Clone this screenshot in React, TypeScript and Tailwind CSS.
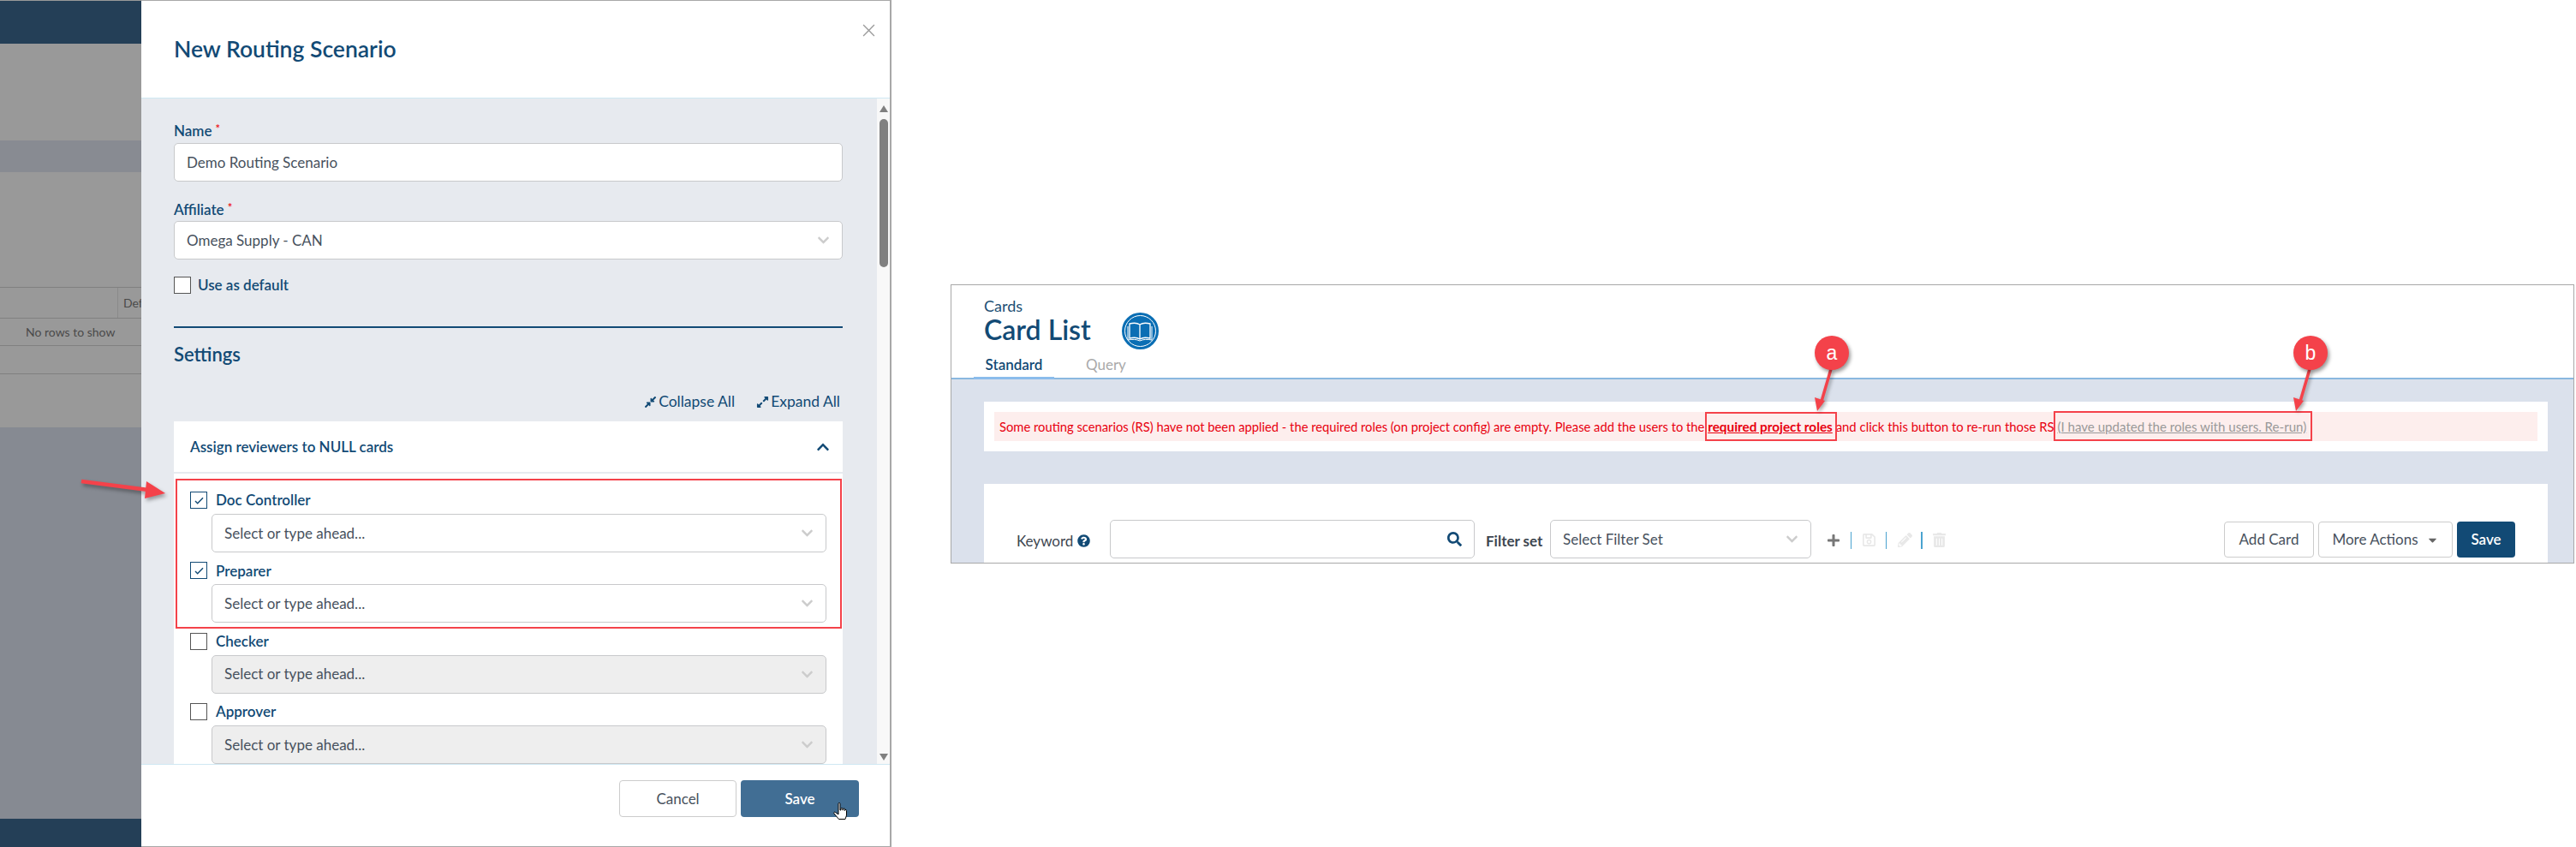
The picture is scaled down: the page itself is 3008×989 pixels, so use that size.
import {
  FaCaretDown,
  FaChevronDown,
  FaChevronUp,
  FaCompressAlt,
  FaExpandAlt,
  FaPencilAlt,
  FaPlus,
  FaQuestionCircle,
  FaRegSave,
  FaSearch,
  FaTrashAlt,
} from "react-icons/fa";

const font = "font-['Lato','Open_Sans',sans-serif]";

function Select({
  text,
  disabled = false,
  className = "",
}: {
  text: string;
  disabled?: boolean;
  className?: string;
}) {
  return (
    <div
      className={`flex h-[45px] items-center justify-between rounded-[5px] border-[1.5px] border-[#c8c9cb] pl-[14px] pr-[14px] text-[17px] text-[#47515d] ${
        disabled ? "bg-[#eeeeee]" : "bg-white"
      } ${className}`}
    >
      <span>{text}</span>
      <FaChevronDown className="h-[15px] w-[15px] text-[#cccccc]" />
    </div>
  );
}

function Reviewer({ label, checked }: { label: string; checked: boolean }) {
  return (
    <div className="mb-[11.3px]">
      <div className="flex h-5 items-center">
        <Checkbox checked={checked} />
        <span className="ml-[10px] text-[17px] font-semibold text-[#124a75]">{label}</span>
      </div>
      <Select text="Select or type ahead..." disabled={!checked} className="ml-[25px] mr-[19px] mt-[6px]" />
    </div>
  );
}

function Checkbox({ checked }: { checked: boolean }) {
  return (
    <div
      className={`flex h-5 w-5 items-center justify-center border-[1.5px] bg-white ${
        checked ? "border-[#124a75]" : "border-[#555555]"
      }`}
    >
      {checked && (
        <svg viewBox="0 0 12 10" className="h-[9px] w-[11px]">
          <path d="M1 5.5 L4 8.5 L11 1.5" fill="none" stroke="#124a75" strokeWidth="1.6" />
        </svg>
      )}
    </div>
  );
}

function Required({ label }: { label: string }) {
  return (
    <div className="flex h-5 items-start text-[17px] font-semibold leading-5 text-[#124a75]">
      {label}
      <span className="ml-[4px] text-[13px] leading-[14px] text-[#ee1111]">*</span>
    </div>
  );
}

function Backdrop() {
  return (
    <div className="relative h-[989px] w-[165px] shrink-0 overflow-hidden bg-[#999999] text-[14px] text-[#4a4a4a]">
      <div className="mt-px h-[50px] bg-[#243f57]" />
      <div className="mt-[113px] h-[37px] bg-[#888b92]" />
      <div className="mt-[134px] flex h-[37px] justify-end border-y border-[#808080]">
        <div className="flex w-[28px] items-center border-l border-[#8a8a8a] pl-[6px]">
          <span className="overflow-hidden">Def</span>
        </div>
      </div>
      <div className="flex h-[32px] items-center border-b border-[#808080] pl-[30px]">No rows to show</div>
      <div className="h-[33px] border-b border-[#808080]" />
      <div className="mt-[62px] h-[457px] bg-[#868a92]" />
      <div className="h-[33px] bg-[#243f57]" />
    </div>
  );
}

function RoutingModal() {
  return (
    <div className="flex h-[989px] w-[876px] shrink-0 flex-col border-x-0 border-y border-r-2 border-[#a8a8a8] bg-white">
      <div className="relative h-[113px] shrink-0 pl-[38px] pt-[40px]">
        <h1 className="text-[26.5px] font-semibold leading-[32px] text-[#124a75]">New Routing Scenario</h1>
        <svg viewBox="0 0 14 14" className="absolute right-[17px] top-[27px] h-[15px] w-[15px]">
          <path d="M1 1 L13 13 M13 1 L1 13" stroke="#9a9a9a" strokeWidth="1.2" />
        </svg>
      </div>
      <div className="flex min-h-0 flex-1 border-y border-[#cfe8f3]">
        <div className="min-w-0 flex-1 overflow-hidden bg-[#e7eaef] pl-[38px] pr-[40px] pt-[28px]">
          <Required label="Name" />
          <div className="mt-1 flex h-[45px] items-center rounded-[5px] border-[1.5px] border-[#c8c9cb] bg-white pl-[14px] text-[17px] text-[#47515d]">
            Demo Routing Scenario
          </div>
          <div className="mt-[23px]">
            <Required label="Affiliate" />
          </div>
          <Select text="Omega Supply - CAN" className="mt-[3px]" />
          <div className="mt-5 flex h-5 items-center">
            <Checkbox checked={false} />
            <span className="ml-2 text-[17px] font-semibold text-[#124a75]">Use as default</span>
          </div>
          <div className="mt-[38px] h-[2px] bg-[#124a75]" />
          <h2 className="mt-[16px] h-[30px] text-[22px] font-semibold leading-[30px] text-[#124a75]">Settings</h2>
          <div className="mt-[30px] flex h-5 items-center justify-end gap-[25px] pr-[3px] text-[17.5px] text-[#124a75]">
            <span className="flex items-center gap-[2px]">
              <FaCompressAlt className="h-[15px] w-[15px]" /> Collapse All
            </span>
            <span className="flex items-center gap-[2px]">
              <FaExpandAlt className="h-[15px] w-[15px]" /> Expand All
            </span>
          </div>
          <div className="relative mt-[13px] bg-white">
            <div className="flex h-[61px] items-center justify-between border-b-2 border-[#e7eaef] pl-[19px] pr-[15px]">
              <span className="text-[17px] font-semibold text-[#124a75]">Assign reviewers to NULL cards</span>
              <FaChevronUp className="h-[16px] w-[16px] text-[#124a75]" />
            </div>
            <div className="pl-[19px] pt-[21px]">
              <Reviewer label="Doc Controller" checked />
              <Reviewer label="Preparer" checked />
              <Reviewer label="Checker" checked={false} />
              <Reviewer label="Approver" checked={false} />
            </div>
            <div className="absolute left-[2px] top-[67px] h-[175px] w-[778px] border-2 border-[#f4424a]" />
          </div>
        </div>
        <div className="relative w-[15px] shrink-0 bg-[#f8f8f8]">
          <div className="absolute left-[3px] top-[8px] h-0 w-0 border-x-[5px] border-b-[8px] border-x-transparent border-b-[#808080]" />
          <div className="absolute left-[3px] top-[24px] h-[173px] w-[10px] rounded-[5px] bg-[#808080]" />
          <div className="absolute bottom-[4px] left-[3px] h-0 w-0 border-x-[5px] border-t-[8px] border-x-transparent border-t-[#808080]" />
        </div>
      </div>
      <div className="relative flex h-[95px] shrink-0 justify-end gap-[5px] pr-[36px] pt-[18px]">
        <button className="h-[43px] w-[137px] rounded-[4px] border-[1.5px] border-[#cccccc] bg-white text-[17px] text-[#47515d]">
          Cancel
        </button>
        <button className="h-[43px] w-[138px] rounded-[4px] bg-[#416e94] text-[17px] font-semibold text-white">
          Save
        </button>
        <svg viewBox="0 0 17 21" className="absolute left-[808px] top-[44px] h-[21px] w-[17px]">
          <path
            d="M6 1.5 a1 1 0 0 1 2 0 V9 h1 V7.5 a1 1 0 0 1 2 0 V9 h.5 V8 a1 1 0 0 1 2 0 V9.5 a1 1 0 0 1 2 0 V15 l-1.5 4.5 H6.5 L1 13 a1 1 0 0 1 1.5 -1.5 L6 14 Z"
            fill="#ffffff"
            stroke="#000000"
            strokeWidth="1"
          />
        </svg>
      </div>
    </div>
  );
}

function CardListPanel() {
  return (
    <div className="relative ml-[69px] mt-[332px] h-[326px] w-[1896px] shrink-0 overflow-hidden border-[1.5px] border-[#a8a8a8] bg-white">
      <div className="h-[110px] border-b-2 border-[#8ab8e0] pl-[26px] pr-0">
        <div className="ml-[12px] pt-[12px] text-[18px] leading-[24px] text-[#1d5074]">Cards</div>
        <div className="ml-[12px] flex h-[32px] items-center">
          <span className="text-[32px] font-semibold leading-[32px] text-[#124a75]">Card List</span>
          <div className="ml-[36px] mt-[3px] flex h-[43px] w-[43px] items-center justify-center rounded-full border-2 border-[#0a6eb4] bg-[#0a6eb4] outline outline-1 -outline-offset-4 outline-white">
            <svg viewBox="0 0 30 24" className="h-[24px] w-[30px]">
              <path d="M15 4 C12 2 7 2 3 3 L3 20 C7 19 12 19 15 21 C18 19 23 19 27 20 L27 3 C23 2 18 2 15 4 Z M15 4 L15 21" fill="none" stroke="#ffffff" strokeWidth="1.3" />
              <path d="M1 6 L1 22 C6 21 11 21 15 23 C19 21 24 21 29 22 L29 6" fill="none" stroke="#ffffff" strokeWidth="1" />
            </svg>
          </div>
        </div>
        <div className="flex h-[42px] items-end text-[17px]">
          <div className="flex h-[30px] w-[94px] items-start justify-center border-b-[3px] border-[#8bbcec] font-semibold text-[#124a75]">
            Standard
          </div>
          <div className="ml-[37px] h-[30px] text-[#aaaaaa]">Query</div>
        </div>
      </div>
      <div className="h-[214px] bg-[#dbe1ec] pl-[38px] pr-[30px] pt-[26px]">
        <div className="h-[58px] bg-white p-[12px]">
          <div className="flex h-[34px] items-center whitespace-pre bg-[#fdeeed] pl-[6px] text-[14.75px] text-[#e8000f]">
            Some routing scenarios (RS) have not been applied - the required roles (on project config) are empty. Please add the users to the{" "}
            <span className="text-[15.3px] font-bold underline">required project roles</span>
            <span className="text-[14.9px]">{" "}and click this button to re-run those RS{" "}</span>
            <span className="text-[15.1px] text-[#999999] underline">(I have updated the roles with users. Re-run)</span>
          </div>
        </div>
        <div className="mt-[38px] flex h-[92px] bg-white pl-[38px] pr-[38px] pt-[42px]">
          <div className="flex h-[49px] w-[109px] items-center text-[17px] text-[#3d4650]">
            Keyword
            <FaQuestionCircle className="ml-[5px] h-[15px] w-[15px] text-[#124a75]" />
          </div>
          <div className="flex h-[45px] w-[426px] items-center justify-end rounded-[5px] border-[1.5px] border-[#c8c9cb] pr-[14px]">
            <FaSearch className="h-[17px] w-[17px] text-[#124a75]" />
          </div>
          <div className="ml-[13px] flex h-[49px] w-[75px] items-center text-[17px] font-bold text-[#3d4650]">
            Filter set
          </div>
          <Select text="Select Filter Set" className="w-[305px]" />
          <div className="ml-[18px] flex h-[47px] items-center">
            <FaPlus className="h-[16px] w-[16px] text-[#777777]" />
            <div className="ml-[12px] h-[20px] w-px bg-[#4aa3d0]" />
            <FaRegSave className="ml-[12px] h-[17px] w-[17px] text-[#e8e8e8]" />
            <div className="ml-[11px] h-[20px] w-px bg-[#4aa3d0]" />
            <FaPencilAlt className="ml-[13px] h-[17px] w-[17px] text-[#e8e8e8]" />
            <div className="ml-[10px] h-[20px] w-[2px] bg-[#4aa3d0]" />
            <FaTrashAlt className="ml-[12px] h-[17px] w-[15px] text-[#e8e8e8]" />
          </div>
          <div className="ml-auto mt-[2px] flex h-[42px] gap-[5px] text-[17px]">
            <button className="w-[105px] rounded-[4px] border-[1.5px] border-[#cccccc] text-[#47515d]">Add Card</button>
            <button className="flex w-[157px] items-center justify-center gap-[9px] rounded-[4px] border-[1.5px] border-[#cccccc] text-[#47515d]">
              More Actions <FaCaretDown className="h-[15px] w-[15px] text-[#666666]" />
            </button>
            <button className="w-[68px] rounded-[4px] bg-[#124a75] font-semibold text-white">Save</button>
          </div>
        </div>
      </div>
      <div className="absolute left-[880px] top-[148px] h-[34px] w-[154px] border-2 border-[#f4424a]" />
      <div className="absolute left-[1287px] top-[147px] h-[35px] w-[302px] border-2 border-[#f4424a]" />
      <Callout letter="a" left={1008} />
      <Callout letter="b" left={1567} />
    </div>
  );
}

function Callout({ letter, left }: { letter: string; left: number }) {
  return (
    <div className="absolute top-[59px]" style={{ left }}>
      <svg viewBox="0 0 40 54" className="absolute left-0 top-[38px] h-[54px] w-[40px] drop-shadow-[2px_2px_2px_rgba(0,0,0,0.35)]">
        <path d="M19 1 L7 42" stroke="#f4424a" strokeWidth="3.5" />
        <path d="M0 34 L12 38 L3 50 Z" fill="#f4424a" />
      </svg>
      <div className="relative flex h-[40px] w-[40px] items-center justify-center rounded-full bg-[#f4424a] font-['Liberation_Sans',sans-serif] text-[23px] text-white shadow-[2px_3px_4px_rgba(0,0,0,0.4)]">
        {letter}
      </div>
    </div>
  );
}

export default function App() {
  return (
    <div className={`relative flex h-[989px] w-[3008px] items-start overflow-hidden bg-white ${font}`}>
      <Backdrop />
      <RoutingModal />
      <CardListPanel />
      <svg viewBox="0 0 104 24" className="absolute left-[93px] top-[558px] h-[24px] w-[104px] drop-shadow-[2px_3px_2px_rgba(0,0,0,0.35)]">
        <path d="M2 4 L80 14" stroke="#f4424a" strokeWidth="4.5" />
        <path d="M78 4 L100 18 L76 24 Z" fill="#f4424a" />
      </svg>
    </div>
  );
}
